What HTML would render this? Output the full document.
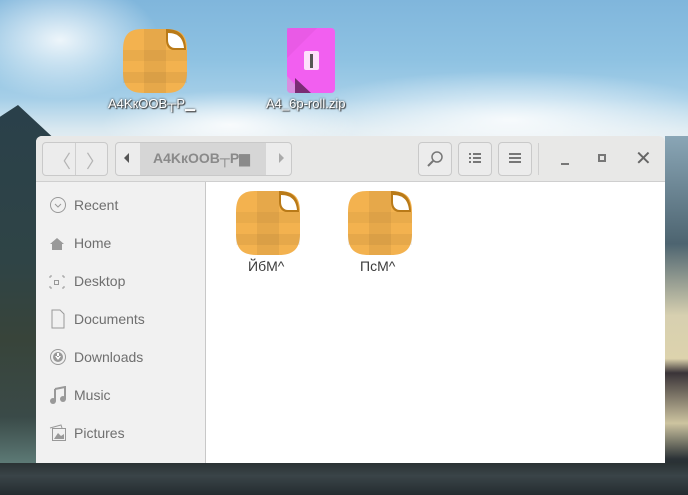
<!DOCTYPE html>
<html><head><meta charset="utf-8"><style>
*{margin:0;padding:0;box-sizing:border-box}
body{width:688px;height:495px;overflow:hidden;position:relative;font-family:"Liberation Sans","DejaVu Sans",sans-serif;
background:linear-gradient(180deg,#80b6dc 0%,#8ec2e2 12%,#a6cfe8 20%,#d8e8f0 26%,#e6eef2 29%,#d2e0e8 33%,#a7bccc 45%,#5d7680 60%,#3c4e52 75%,#2a3538 100%);}
.cl{position:absolute;border-radius:50%;background:radial-gradient(ellipse at center,rgba(255,255,255,.85),rgba(255,255,255,0) 70%)}
.hill{position:absolute;left:0;top:105px;width:60px;height:390px;background:linear-gradient(180deg,#2a404a 0%,#2f4446 40%,#38443a 60%,#3a4a48 80%,#5d7a76 92%,#2a3438 100%);clip-path:polygon(0 3%,30% 0,100% 10%,100% 100%,0 100%)}
.rhs{position:absolute;left:665px;top:136px;width:23px;height:359px;background:linear-gradient(180deg,#8aa6b6 0%,#4d6470 30%,#d7d0b0 50%,#ddd3ad 62%,#3a3438 66%,#cdc4a0 80%,#2b3236 90%,#222a2e 100%)}
.bot{position:absolute;left:0;top:463px;width:688px;height:32px;background:linear-gradient(180deg,#2a3234,#3a4448 40%,#242c30)}
.dlabel{position:absolute;font-size:13px;color:#fff;text-shadow:0 0 2px #333,1px 1px 1px #333;white-space:nowrap}
.win{position:absolute;left:36px;top:136px;width:629px;height:327px;background:#fff;border-radius:6px 6px 0 0;overflow:hidden}
.hdr{position:absolute;left:0;top:0;width:629px;height:46px;background:#e8e8e7;border-bottom:1px solid #cfcfcf}
.btn{position:absolute;top:6px;height:34px;border:1px solid #c9c9c9;border-radius:4px;background:#ececec}
.side{position:absolute;left:0;top:46px;width:170px;height:281px;background:#f1f1f1;border-right:1px solid #c8c8c8}
.it{position:absolute;left:38px;font-size:14px;color:#6f6f6f}
.ic{position:absolute;left:13px}
.flabel{position:absolute;font-size:14px;color:#3c3c3c}
</style></head><body>
<svg width="0" height="0" style="position:absolute"><defs>
<symbol id="fold" viewBox="0 0 66 66">
<path d="M20 1 H44 C60 1 65 8 65 22 V44 C65 59 58 65 44 65 H22 C7 65 1 59 1 44 V22 C1 7 7 1 20 1Z" fill="#f3b24f"/>
<path d="M44 1 C58 1 64 8 64 22 H52 C47 22 44 18 44 12Z" fill="#b97a18"/>
<path d="M46 5 C57 5 61 11 62 20 H53 C49 20 46 17 46 12Z" fill="#fff"/>
<rect x="22" y="1" width="22" height="64" fill="#000" opacity=".05"/>
<rect x="1" y="22" width="64" height="11" fill="#000" opacity=".04"/>
<rect x="1" y="44" width="64" height="11" fill="#000" opacity=".05"/>
</symbol></defs></svg>
<div class="cl" style="left:-40px;top:-20px;width:200px;height:120px"></div>
<div class="cl" style="left:280px;top:70px;width:460px;height:100px"></div>
<div class="cl" style="left:100px;top:90px;width:260px;height:70px"></div>
<div class="hill"></div><div class="rhs"></div><div class="bot"></div>
<svg style="position:absolute;left:122px;top:28px" width="66" height="66"><use href="#fold"/></svg>
<div class="dlabel" style="left:108px;top:96px">A4KкOOB┬P▁</div>
<svg style="position:absolute;left:287px;top:28px" width="48" height="65" viewBox="0 0 48 65">
<rect x="0" y="0" width="48" height="65" rx="4" fill="#f25ff0"/>
<path d="M0 0 L30 0 L0 30Z" fill="#e257e0" opacity=".6"/>
<path d="M0 48 L16 65 H4 C2 65 0 63 0 61Z" fill="#d98ee0"/>
<path d="M8 50 L24 65 H8Z" fill="#7a2c74"/>
<rect x="17" y="23" width="15" height="19" rx="2" fill="#fde0fb"/>
<rect x="23" y="26" width="3" height="14" fill="#555"/>
</svg>
<div class="dlabel" style="left:266px;top:96px">A4_6p-roll.zip</div>
<div class="win">
<div class="hdr">
<div class="btn" style="left:6px;width:66px"></div>
<div style="position:absolute;left:39px;top:7px;width:1px;height:32px;background:#cfcfcf"></div>
<div style="position:absolute;left:17px;top:12px;font-size:18px;color:#b4b4b4">&#x2329;</div>
<div style="position:absolute;left:50px;top:12px;font-size:18px;color:#b4b4b4">&#x232A;</div>
<div class="btn" style="left:79px;width:177px"></div>
<div style="position:absolute;left:104px;top:7px;width:126px;height:32px;background:#d6d6d6"></div>
<div style="position:absolute;left:88px;top:17px;width:0;height:0;border-top:5px solid transparent;border-bottom:5px solid transparent;border-right:5px solid #555"></div>
<div style="position:absolute;left:243px;top:17px;width:0;height:0;border-top:5px solid transparent;border-bottom:5px solid transparent;border-left:5px solid #aaa"></div>
<div style="position:absolute;left:117px;top:14px;font-size:14px;font-weight:bold;color:#8a8a8a">A4KкOOB┬P▆</div>
<div class="btn" style="left:382px;width:34px"></div>
<svg style="position:absolute;left:390px;top:14px" width="18" height="18"><circle cx="11" cy="7" r="5" fill="none" stroke="#777" stroke-width="1.5"/><line x1="7" y1="11" x2="2" y2="16" stroke="#777" stroke-width="2"/></svg>
<div class="btn" style="left:422px;width:34px"></div>
<svg style="position:absolute;left:432px;top:16px" width="14" height="14"><g fill="#777"><rect x="1" y="1" width="2" height="2"/><rect x="5" y="1" width="8" height="2"/><rect x="1" y="5" width="2" height="2"/><rect x="5" y="5" width="8" height="2"/><rect x="1" y="9" width="2" height="2"/><rect x="5" y="9" width="8" height="2"/></g></svg>
<div class="btn" style="left:462px;width:34px"></div>
<svg style="position:absolute;left:472px;top:16px" width="14" height="14"><g fill="#777"><rect x="1" y="1" width="12" height="2"/><rect x="1" y="5" width="12" height="2"/><rect x="1" y="9" width="12" height="2"/></g></svg>
<div style="position:absolute;left:502px;top:7px;width:1px;height:32px;background:#d0d0d0"></div>
<div style="position:absolute;left:525px;top:27px;width:8px;height:2px;background:#777"></div>
<div style="position:absolute;left:562px;top:18px;width:8px;height:8px;border:2px solid #777"></div>
<div style="position:absolute;left:599px;top:10px;font-size:20px;color:#666">✕</div>
</div>
<div class="side">
<svg class="ic" style="top:14px" width="18" height="18"><circle cx="9" cy="9" r="7.5" fill="none" stroke="#999"/><path d="M6 8 L9 11 L12 8" fill="none" stroke="#999"/></svg>
<div class="it" style="top:15px">Recent</div>
<svg class="ic" style="top:53px" width="18" height="18"><path d="M1 9 L8 3 L15 9 H13 V15 H3 V9Z" fill="#999"/></svg>
<div class="it" style="top:53px">Home</div>
<svg class="ic" style="top:91px" width="18" height="18"><path d="M1 3 H3 M1 3 V5 M15 3 H13 M15 3 V5 M1 15 H3 M1 15 V13 M15 15 H13 M15 15 V13" stroke="#999" fill="none"/><rect x="5.5" y="7.5" width="4" height="4" fill="none" stroke="#999"/></svg>
<div class="it" style="top:91px">Desktop</div>
<svg class="ic" style="top:127px" width="18" height="20"><path d="M3 1 H11 L15 5 V19 H3Z" fill="none" stroke="#999"/></svg>
<div class="it" style="top:129px">Documents</div>
<svg class="ic" style="top:166px" width="18" height="18"><circle cx="9" cy="9" r="7.5" fill="none" stroke="#999"/><circle cx="9" cy="9" r="5" fill="#999"/><path d="M6 8 L9 12 L12 8Z M8 5 H10 V9 H8Z" fill="#fff"/></svg>
<div class="it" style="top:167px">Downloads</div>
<svg class="ic" style="top:204px" width="18" height="18"><path d="M6 3 L16 1 V13" stroke="#999" stroke-width="2" fill="none"/><path d="M6 3 V15" stroke="#999" stroke-width="2"/><circle cx="4" cy="15" r="3" fill="#999"/><circle cx="14" cy="13" r="3" fill="#999"/></svg>
<div class="it" style="top:205px">Music</div>
<svg class="ic" style="top:242px" width="18" height="18"><path d="M1 4 L12 1 L13 4" fill="none" stroke="#999"/><rect x="3.5" y="4.5" width="13" height="12" fill="none" stroke="#999"/><path d="M5 15 L9 9 L12 12 L15 10 V15Z" fill="#999"/></svg>
<div class="it" style="top:243px">Pictures</div>
</div>
<svg style="position:absolute;left:199px;top:54px" width="66" height="66"><use href="#fold"/></svg>
<div class="flabel" style="left:212px;top:122px">ЙбМ^</div>
<svg style="position:absolute;left:311px;top:54px" width="66" height="66"><use href="#fold"/></svg>
<div class="flabel" style="left:324px;top:122px">ПсМ^</div>
</div>
</body></html>
